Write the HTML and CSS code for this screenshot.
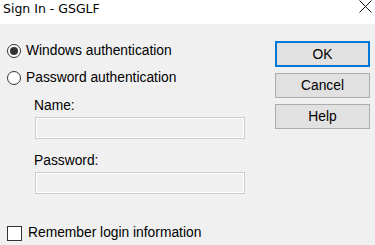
FILE: index.html
```html
<!DOCTYPE html>
<html lang="en">
<head>
    <meta charset="UTF-8">
    <meta name="viewport" content="width=device-width, initial-scale=1.0">
    <title>Sign In - GSGLF</title>
    <link rel="stylesheet" href="styles.css">
</head>
<body>
    <div class="titlebar">
        <span class="title">Sign In - GSGLF</span>
        <svg class="close" width="13" height="13" viewBox="0 0 13 13">
            <path d="M0.5 0.5 L12.5 12.5 M12.5 0.5 L0.5 12.5" stroke="#111" stroke-width="1" fill="none"/>
        </svg>
    </div>

    <div class="dialog">
        <div class="main">
            <label class="option">
                <span class="radio checked"></span>
                Windows authentication
            </label>
            <label class="option">
                <span class="radio"></span>
                Password authentication
            </label>

            <div class="fields">
                <div class="field-label name-label">Name:</div>
                <div class="textbox"></div>
                <div class="field-label pass-label">Password:</div>
                <div class="textbox"></div>
            </div>

            <label class="remember">
                <span class="checkbox"></span>
                Remember login information
            </label>
        </div>

        <div class="buttons">
            <button class="btn default">OK</button>
            <button class="btn">Cancel</button>
            <button class="btn">Help</button>
        </div>
    </div>
</body>
</html>
```

FILE: styles.css
```css
body {
    margin: 0;
    width: 375px;
    height: 245px;
    overflow: hidden;
    background-color: #f0f0f0;
    font-family: "Liberation Sans", Arial, sans-serif;
    font-size: 13.8px;
    color: #000;
}

.titlebar {
    height: 24px;
    background: #fff;
    display: flex;
    justify-content: space-between;
    align-items: flex-start;
}

.title {
    font-family: "DejaVu Sans", sans-serif;
    font-size: 12.5px;
    line-height: 16px;
    padding: 1px 0 0 3px;
    color: #000;
}

.close {
    margin: 0 3px 0 0;
}

.dialog {
    display: flex;
}

.main {
    flex: 1;
    padding-top: 13px;
}

.option {
    display: flex;
    align-items: center;
    height: 27px;
    line-height: 16px;
    padding-left: 7px;
}

.radio {
    width: 14px;
    height: 14px;
    border: 1px solid #333;
    border-radius: 50%;
    background: #fff;
    margin-right: 5px;
    display: flex;
    align-items: center;
    justify-content: center;
    box-sizing: border-box;
}

.radio.checked::after {
    content: "";
    width: 8px;
    height: 8px;
    border-radius: 50%;
    background: #333;
}

.fields {
    padding-left: 35px;
}

.field-label {
    line-height: 16px;
    margin-left: -1px;
}

.name-label {
    margin-top: 7px;
}

.pass-label {
    margin-top: 14px;
}

.textbox {
    width: 208px;
    height: 20px;
    margin-top: 3px;
    border: 1px solid #cccccc;
    box-shadow: inset 0 0 0 1px #fff;
    background: #f0f0f0;
}

.remember {
    display: flex;
    align-items: center;
    margin-top: 31px;
    padding-left: 7px;
    line-height: 16px;
}

.checkbox {
    width: 15px;
    height: 15px;
    border: 1px solid #333;
    background: #fff;
    margin-right: 6px;
    box-sizing: border-box;
}

.buttons {
    width: 95px;
    margin: 17px 5px 0 0;
    display: flex;
    flex-direction: column;
    gap: 6px;
}

.btn {
    height: 25px;
    margin: 0;
    padding: 0;
    font-family: "Liberation Sans", Arial, sans-serif;
    font-size: 13.8px;
    color: #000;
    background: #e1e1e1;
    border: 1px solid #adadad;
    border-radius: 0;
}

.btn.default {
    height: 26px;
    border: 2px solid #0078d7;
}
```
